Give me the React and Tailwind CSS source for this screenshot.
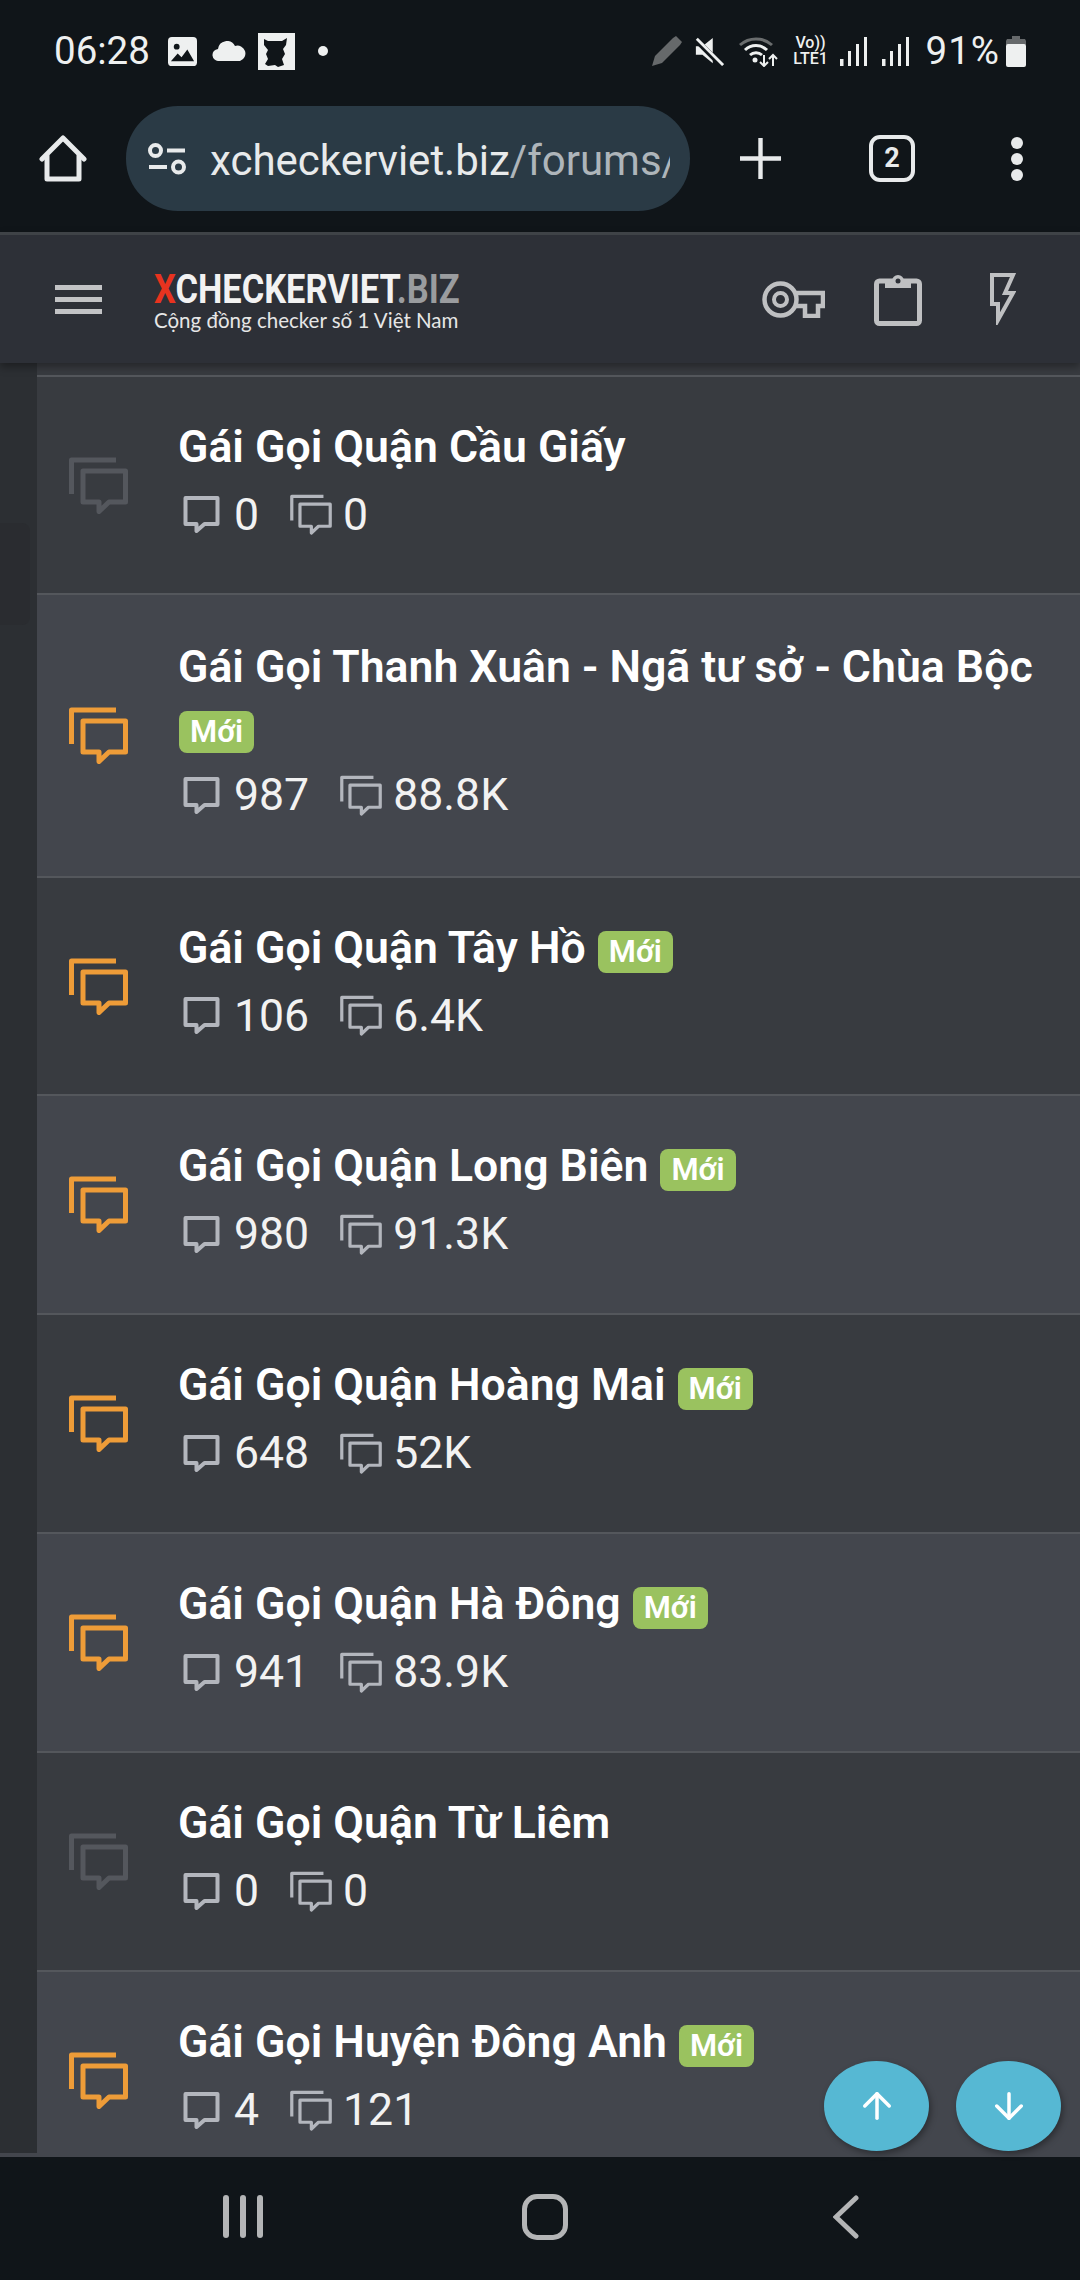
import { ArrowUp, ArrowDown } from 'lucide-react';

const rows = [
  { title: 'Gái Gọi Quận Cầu Giấy', threads: '0', posts: '0', dim: true, h: 'h-[218px]', bg: 'bg-[#383b40]' },
  { title: 'Gái Gọi Thanh Xuân - Ngã tư sở - Chùa Bộc', threads: '987', posts: '88.8K', isNew: true, wrapped: true, h: 'h-[283px]', bg: 'bg-[#43464d]' },
  { title: 'Gái Gọi Quận Tây Hồ', threads: '106', posts: '6.4K', isNew: true, h: 'h-[218px]', bg: 'bg-[#383b40]' },
  { title: 'Gái Gọi Quận Long Biên', threads: '980', posts: '91.3K', isNew: true, h: 'h-[219px]', bg: 'bg-[#43464d]' },
  { title: 'Gái Gọi Quận Hoàng Mai', threads: '648', posts: '52K', isNew: true, h: 'h-[219px]', bg: 'bg-[#383b40]' },
  { title: 'Gái Gọi Quận Hà Đông', threads: '941', posts: '83.9K', isNew: true, h: 'h-[219px]', bg: 'bg-[#43464d]' },
  { title: 'Gái Gọi Quận Từ Liêm', threads: '0', posts: '0', dim: true, h: 'h-[219px]', bg: 'bg-[#383b40]' },
  { title: 'Gái Gọi Huyện Đông Anh', threads: '4', posts: '121', isNew: true, h: 'h-[219px]', bg: 'bg-[#43464d]' },
];

function SingleBubble({ className }) {
  return (
    <svg viewBox="0 0 36 37" className={className} fill="none" stroke="currentColor" strokeWidth="4" strokeLinejoin="round">
      <path d="M2 2h32v26H21l-8 7v-7H2z" />
    </svg>
  );
}

function DoubleBubble({ className, strokeWidth = 5 }) {
  return (
    <svg viewBox="0 0 59 57" className={className} fill="none" stroke="currentColor" strokeWidth={strokeWidth} strokeLinejoin="round">
      <path d="M2.500 37V3H47" />
      <path d="M14 14h42.500v31H40l-10 9.500v-9.500H14z" />
    </svg>
  );
}

function ForumRow({ row }) {
  return (
    <div className={`flex items-center shrink-0 border-t-2 border-[#54575c] ${row.h} ${row.bg}`}>
      <div className="w-[142px] shrink-0 pl-[32px]">
        <DoubleBubble className={row.dim ? 'w-[59px] h-[57px] text-[#54575d]' : 'w-[59px] h-[57px] text-[#ee9c38]'} />
      </div>
      <div className="min-w-0 pb-[10px]">
        <div className="-ml-[1px] text-[44.600px] leading-[69px] font-semibold text-white whitespace-nowrap">{row.title}
          {row.isNew && !row.wrapped && (
            <span className="inline-block ml-3 px-[11px] h-[42px] leading-[42px] rounded-lg bg-[#9ac25f] text-[31px] font-semibold align-[1px]">Mới</span>
          )}
        </div>
        {row.wrapped && (
          <div className="h-[60px] flex items-center">
            <span className="inline-block px-[11px] h-[42px] leading-[42px] rounded-lg bg-[#9ac25f] text-[31px] font-semibold text-white">Mới</span>
          </div>
        )}
        <div className="flex items-center text-[44.600px] leading-[66px] text-[#f2f2f2]">
          <SingleBubble className="w-[37px] h-[37px] text-[#b3b6bd] ml-[4px] mr-[14px]" />
          <span>{row.threads}</span>
          <DoubleBubble strokeWidth={4.500} className="w-[42px] h-[41px] text-[#b3b6bd] ml-[31px] mr-[11px]" />
          <span>{row.posts}</span>
        </div>
      </div>
    </div>
  );
}

function SignalBars({ className }) {
  return (
    <svg viewBox="0 0 28 30" className={className} fill="#eef0f0">
      <rect x="0" y="23" width="3.500" height="7" />
      <rect x="8" y="15" width="3" height="15" />
      <rect x="16" y="8" width="3" height="22" />
      <rect x="24" y="1" width="3" height="29" />
    </svg>
  );
}

function StatusBar() {
  return (
    <div className="h-[100px] shrink-0 flex items-center justify-between pl-[54px] pr-[53px] pt-[2px] text-[#eef0f0] text-[38.500px]">
      <div className="flex items-center">
        <span>06:28</span>
        <svg viewBox="0 0 30 30" className="w-[29px] h-[29px] ml-[18px]">
          <rect width="30" height="30" rx="4" fill="#eef0f0" />
          <circle cx="9" cy="10" r="3" fill="#101519" />
          <path d="M3 25l7-8 4 4 6-8 7 12z" fill="#101519" />
        </svg>
        <svg viewBox="0 0 34 20" className="w-[34px] h-[20px] ml-[15px]">
          <path d="M7 20a6 6 0 0 1-1-12 9 9 0 0 1 17-3 7 7 0 0 1 5 15z" fill="#eef0f0" />
        </svg>
        <svg viewBox="0 0 37 37" className="w-[37px] h-[37px] ml-[12px]">
          <rect width="37" height="37" fill="#eef0f0" />
          <path d="M6 6l4 2h14l5-3-1 7-3 4 2 5-3 5 2 6-6 2-3-2-7 1-3-2 3-5-2-5 2-4-4-5z" fill="#101519" />
        </svg>
        <span className="w-[10px] h-[10px] rounded-full bg-[#eef0f0] ml-[23px]" />
      </div>
      <div className="flex items-center">
        <svg viewBox="0 0 32 32" className="w-[32px] h-[32px]">
          <path d="M1 31l3-10L22 3l3-2 6 6-2 3-18 18z" fill="#66696b" />
        </svg>
        <svg viewBox="0 0 32 32" className="w-[30px] h-[30px] ml-[11px]">
          <path d="M2 11h7l11-9v27l-11-9H2z" fill="#eef0f0" />
          <path d="M1 3l28 28" stroke="#101519" strokeWidth="6" />
          <path d="M3 3l28 28" stroke="#eef0f0" strokeWidth="3" />
        </svg>
        <svg viewBox="0 0 42 32" className="w-[42px] h-[32px] ml-[13px]" fill="none">
          <path d="M3 10a24 24 0 0 1 32 0" stroke="#6a6d6e" strokeWidth="3" />
          <path d="M8 15a16 16 0 0 1 22 0M13 20a9 9 0 0 1 12 0" stroke="#eef0f0" strokeWidth="3" />
          <circle cx="18" cy="25" r="2.500" fill="#eef0f0" />
          <path d="M27 20v11M23 27l4 4 4-4M36 31V20M32 24l4-4 4 4" stroke="#eef0f0" strokeWidth="2" />
        </svg>
        <div className="ml-[12px] w-[40px] flex flex-col items-center text-[16px] leading-[16px] font-medium">
          <span>Vo))</span>
          <span>LTE1</span>
        </div>
        <SignalBars className="w-[28px] h-[30px] ml-[9px]" />
        <SignalBars className="w-[28px] h-[30px] ml-[14px]" />
        <span className="ml-[16px] tracking-[1px]">91%</span>
        <svg viewBox="0 0 22 32" className="w-[22px] h-[32px] ml-[5px]">
          <path d="M7 1h8v3H7z" fill="#66696b" />
          <path d="M2 4h18l1 2v4H1V6z" fill="#66696b" />
          <rect x="1" y="9" width="20" height="23" rx="2" fill="#eef0f0" />
        </svg>
      </div>
    </div>
  );
}

function BrowserBar() {
  return (
    <div className="h-[132px] shrink-0 flex items-center pb-[15px] text-[#e8eaeb]">
      <svg viewBox="0 0 48 48" className="w-[48px] h-[48px] ml-[39px]" fill="none" stroke="currentColor" strokeWidth="5" strokeLinejoin="round" strokeLinecap="round">
        <path d="M3 24L24 3l21 21" />
        <path d="M8 21v23h32V21" />
      </svg>
      <div className="ml-[39px] w-[564px] h-[105px] rounded-[52px] bg-[#2a3a45] flex items-center pl-[22px] pr-[20px]">
        <svg viewBox="0 0 38 32" className="w-[38px] h-[32px] shrink-0" fill="none" stroke="currentColor" strokeWidth="4">
          <circle cx="7.500" cy="7.500" r="5.500" />
          <path d="M19 7.500h18M1 24h18" />
          <circle cx="30.500" cy="24" r="5.500" />
        </svg>
        <div className="ml-[24px] pt-[3px] overflow-hidden whitespace-nowrap text-[42px] text-[#e8eaeb]">
          xcheckerviet.biz<span className="text-[#aeb5ba]">/forums/</span>
        </div>
      </div>
      <svg viewBox="0 0 44 44" className="w-[43px] h-[43px] ml-[49px]" stroke="currentColor" strokeWidth="4.500">
        <path d="M22 1v42M1 22h42" />
      </svg>
      <div className="ml-[87px] w-[46px] h-[47px] rounded-[11px] border-[4px] border-[#e8eaeb] flex items-center justify-center text-[27px] font-bold">2</div>
      <div className="ml-[96px] flex flex-col gap-[4px]">
        <span className="w-[12px] h-[12px] rounded-full bg-[#e8eaeb]" />
        <span className="w-[12px] h-[12px] rounded-full bg-[#e8eaeb]" />
        <span className="w-[12px] h-[12px] rounded-full bg-[#e8eaeb]" />
      </div>
    </div>
  );
}

function SiteHeader() {
  return (
    <div className="relative z-10 h-[131px] shrink-0 flex items-center bg-[#2d3037] border-t-[3px] border-[#3f4347] shadow-[0_4px_8px_rgba(0,0,0,0.35)]">
      <div className="ml-[55px] w-[47px] flex flex-col gap-[7px]">
        <span className="h-[5px] bg-[#c2c3c5]" />
        <span className="h-[5px] bg-[#c2c3c5]" />
        <span className="h-[5px] bg-[#c2c3c5]" />
      </div>
      <div className="ml-[52px] w-[300px] pt-[4px]">
        <div className="text-[41px] leading-[36px] font-bold whitespace-nowrap origin-left scale-x-[0.84]">
          <span className="text-[#e8331f]">X</span>
          <span className="text-[#f2f2f2]">CHECKERVIET</span>
          <span className="text-[#9a9c9f]">.BIZ</span>
        </div>
        <div className="mt-[1px] text-[20.500px] leading-[24px] text-[#e6e6e6] font-['Lato',sans-serif] whitespace-nowrap">Cộng đồng checker số 1 Việt Nam</div>
      </div>
      <div className="ml-auto flex items-center text-[#bfc0c2] mr-[64px]">
        <svg viewBox="0 0 63 37" className="w-[63px] h-[37px]" fill="none" stroke="currentColor" strokeWidth="4.500">
          <circle cx="18.500" cy="18.500" r="16" />
          <circle cx="18.500" cy="18.500" r="6.500" strokeWidth="4" />
          <path d="M34 12h27v13h-5v10H43V25h-9" />
        </svg>
        <svg viewBox="0 0 48 53" className="w-[48px] h-[53px] ml-[49px]" fill="none" stroke="currentColor" strokeWidth="5" strokeLinejoin="round">
          <rect x="2.500" y="8" width="43" height="42.500" rx="3" />
          <path d="M11 8h7a6 6 0 0 1 12 0h7v7H11z" fill="currentColor" stroke="none" />
          <circle cx="24" cy="8" r="2.500" fill="#2d3037" stroke="none" />
        </svg>
        <svg viewBox="0 0 26 52" className="w-[26px] h-[52px] ml-[68px]" fill="none" stroke="currentColor" strokeWidth="4" strokeLinejoin="miter">
          <path d="M2 2H23L15 20H23L8 47V31H2Z" />
        </svg>
      </div>
    </div>
  );
}

export default function App() {
  return (
    <div className="relative w-[1080px] h-[2280px] overflow-hidden flex flex-col bg-[#101519] font-['Roboto',sans-serif]">
      <StatusBar />
      <BrowserBar />
      <SiteHeader />
      <div className="flex-1 min-h-0 flex overflow-hidden bg-[#43464d]">
        {/* left gutter */}
        <div className="w-[37px] shrink-0 mb-[4px] bg-[#2c2f33]">
          <div className="w-[30px] h-[102px] mt-[160px] rounded-r-lg bg-[#2a2c30]" />
        </div>
        <div className="flex-1 min-w-0 flex flex-col pt-[12px] bg-[#383b40]">
          {rows.map((row) => (
            <ForumRow key={row.title} row={row} />
          ))}
        </div>
      </div>
      {/* bottom nav */}
      <div className="h-[123px] shrink-0 flex items-center pl-[223px] pb-[4px] bg-[#101519] text-[#b4b5b6]">
        <div className="flex items-center w-[40px] justify-between">
          <span className="w-[6px] h-[43px] rounded-full bg-[#b4b5b6]" />
          <span className="w-[6px] h-[43px] rounded-full bg-[#b4b5b6]" />
          <span className="w-[6px] h-[43px] rounded-full bg-[#b4b5b6]" />
        </div>
        <div className="ml-[259px] w-[46px] h-[46px] rounded-[15px] border-[5px] border-[#b4b5b6]" />
        <svg viewBox="0 0 26 44" className="w-[26px] h-[44px] ml-[265px]" fill="none" stroke="currentColor" strokeWidth="5" strokeLinecap="round">
          <path d="M23 3L3 22l20 19" />
        </svg>
      </div>
      {/* floating scroll buttons */}
      <div className="absolute left-[824px] top-[2061px] flex gap-[27px]">
        <button className="w-[105px] h-[90px] rounded-[50%] bg-[#56b8d3] text-white flex items-center justify-center shadow-[2px_3px_6px_rgba(0,0,0,0.35)]">
          <ArrowUp className="w-[42px] h-[42px]" strokeWidth={2} />
        </button>
        <button className="w-[105px] h-[90px] rounded-[50%] bg-[#56b8d3] text-white flex items-center justify-center shadow-[2px_3px_6px_rgba(0,0,0,0.35)]">
          <ArrowDown className="w-[42px] h-[42px]" strokeWidth={2} />
        </button>
      </div>
    </div>
  );
}
